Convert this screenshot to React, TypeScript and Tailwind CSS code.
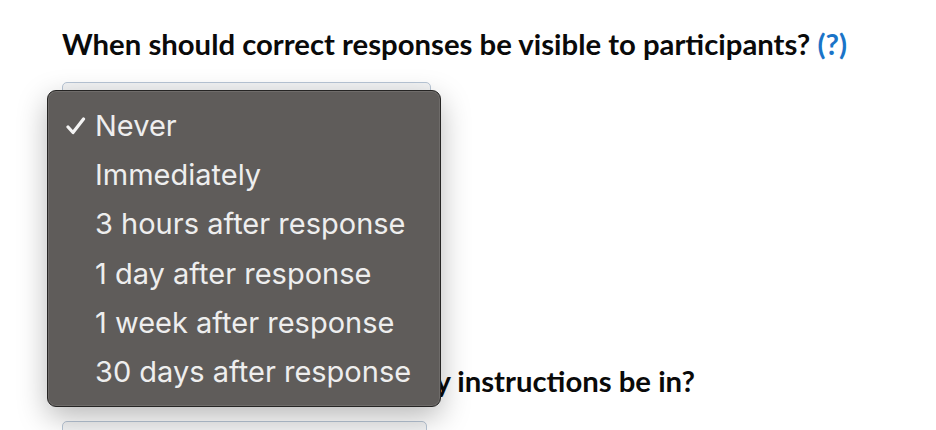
const options = [
  "Never",
  "Immediately",
  "3 hours after response",
  "1 day after response",
  "1 week after response",
  "30 days after response",
];

function Check() {
  return (
    <svg width="20" height="18" viewBox="0 0 20 18" className="shrink-0">
      <path d="M2 10 L7 15.5 L17.5 2" fill="none" stroke="#f4f4f4" strokeWidth="3.2" strokeLinecap="round" strokeLinejoin="round" />
    </svg>
  );
}

export default function App() {
  return (
    <div className="relative h-[430px] w-[936px] overflow-hidden bg-white pl-[62px] pt-[26px] font-['Lato',sans-serif]">
      <h2 className="whitespace-nowrap text-[29.3px] font-bold leading-[36px] text-[#0a0a0a]">
        When should correct responses be visible to participants?{" "}
        <span className="text-[#1a74c8]">(?)</span>
      </h2>
      <div className="mt-[20px] h-[38px] w-[369px] rounded-[5px] border border-[#b8c6d6] bg-[#f3f4f5]" />

      <h2 className="mt-[243px] whitespace-nowrap text-[29.3px] font-bold leading-[36px] text-[#0a0a0a]">
        Which language would survey instructions be in?
      </h2>
      <div className="mt-[22px] h-[38px] w-[365px] rounded-[5px] border border-[#b8c6d6] bg-[#f3f4f5]" />

      <div className="absolute left-[47px] top-[90px] flex h-[317px] w-[394px] flex-col rounded-[9px] border border-[#262524] bg-[#5f5c5a] py-[10px] shadow-[0_10px_30px_rgba(0,0,0,0.28),inset_0_0_0_1px_rgba(255,255,255,0.1)] font-['Inter',sans-serif]">
        {options.map((o, i) => (
          <div key={o} className="flex h-[49.4px] items-center text-[29px] leading-none text-[#eeeeee]">
            <div className="flex w-[47px] justify-end pr-[9px]">{i === 0 && <Check />}</div>
            <span className="whitespace-nowrap">{o}</span>
          </div>
        ))}
      </div>
    </div>
  );
}
